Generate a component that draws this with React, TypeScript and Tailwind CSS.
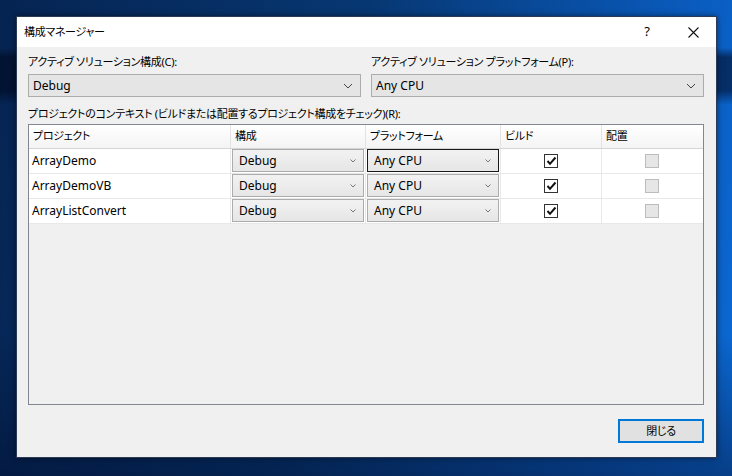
import React from "react";

const font = "font-['Noto_Sans','Noto_Sans_CJK_JP',sans-serif] [font-feature-settings:'palt']";
const jp = "text-[11px] tracking-[-0.3px]";

function Chevron({ big = false }: { big?: boolean }) {
  return big ? (
    <svg width="10" height="6" viewBox="0 0 10 6" className="shrink-0">
      <path d="M1 1 L5 5 L9 1" fill="none" stroke="#444" strokeWidth="1" />
    </svg>
  ) : (
    <svg width="6" height="4" viewBox="0 0 6 4" className="shrink-0">
      <path d="M0.5 0.5 L3 3 L5.5 0.5" fill="none" stroke="#777" strokeWidth="1" />
    </svg>
  );
}

function CellCombo({ value, focused = false }: { value: string; focused?: boolean }) {
  return (
    <div
      className={`h-[23px] flex items-center justify-between pl-[6px] pr-[7px] bg-[linear-gradient(#f2f2f2,#e6e6e6)] border ${
        focused ? "border-[#1a1a1a]" : "border-[#acacac]"
      }`}
    >
      <span className="text-[12px] text-black leading-none">{value}</span>
      <Chevron />
    </div>
  );
}

function Check({ checked }: { checked: boolean }) {
  return checked ? (
    <div className="w-[14px] h-[14px] border border-[#333] bg-white flex items-center justify-center">
      <svg width="11" height="10" viewBox="0 0 11 10">
        <path d="M1.5 5 L4 7.8 L9.5 1.5" fill="none" stroke="#111" strokeWidth="2" />
      </svg>
    </div>
  ) : (
    <div className="w-[14px] h-[14px] border border-[#bcbcbc] bg-[#e6e6e6]" />
  );
}

const rows = ["ArrayDemo", "ArrayDemoVB", "ArrayListConvert"];
const cols = "grid-cols-[202px_135px_135px_101px_100px]";

export default function App() {
  return (
    <div
      className={`${font} w-[732px] h-[476px] overflow-hidden pl-[16px] pt-[16px] bg-[linear-gradient(180deg,rgba(0,0,0,0)_10%,rgba(0,5,25,0.55)_12%,rgba(0,5,25,0.55)_19%,rgba(0,0,0,0)_22%,rgba(0,0,0,0)_70%,rgba(0,10,40,0.45)_100%),linear-gradient(100deg,#062452_0%,#073772_45%,#0a5bbd_85%,#0c6ad6_100%)]`}
    >
      <div className="w-[701px] h-[442px] flex flex-col bg-[#f0f0f0] border border-[#2b3a55] shadow-[0_0_6px_rgba(0,0,0,0.5)]">
        {/* title bar */}
        <div className="h-[30px] bg-white flex items-center pl-[7px] shrink-0">
          <span className={`${jp} text-black flex-1`}>構成マネージャー</span>
          <span className="text-[13px] text-black w-[46px] text-center">?</span>
          <div className="w-[46px] flex items-center justify-center mr-[0px]">
            <svg width="11" height="11" viewBox="0 0 11 11">
              <path d="M0.5 0.5 L10.5 10.5 M10.5 0.5 L0.5 10.5" stroke="#111" strokeWidth="1.1" />
            </svg>
          </div>
        </div>

        {/* body */}
        <div className="flex-1 flex flex-col pl-[11px] pr-[12px] pt-[7px]">
          <div className="flex gap-[10px]">
            <div className="w-[333px] flex flex-col">
              <span className={`${jp} text-black leading-[16px] mb-[4px]`}>
                アクティブ ソリューション構成(C):
              </span>
              <div className="h-[23px] bg-[#e5e5e5] border border-[#acacac] flex items-center justify-between pl-[4px] pr-[7px]">
                <span className="text-[12px] text-black">Debug</span>
                <Chevron big />
              </div>
            </div>
            <div className="w-[333px] flex flex-col">
              <span className={`${jp} text-black leading-[16px] mb-[4px]`}>
                アクティブ ソリューション プラットフォーム(P):
              </span>
              <div className="h-[23px] bg-[#e5e5e5] border border-[#acacac] flex items-center justify-between pl-[4px] pr-[7px]">
                <span className="text-[12px] text-black">Any CPU</span>
                <Chevron big />
              </div>
            </div>
          </div>

          <span className={`${jp} text-black leading-[16px] mt-[9px] mb-[2px]`}>
            プロジェクトのコンテキスト (ビルドまたは配置するプロジェクト構成をチェック)(R):
          </span>

          {/* grid */}
          <div className="h-[281px] border border-[#828790] bg-[#f0f0f0] flex flex-col">
            <div className={`grid ${cols} h-[24px] bg-[linear-gradient(#ffffff,#f4f4f4)] border-b border-[#d5d5d5]`}>
              {["プロジェクト", "構成", "プラットフォーム", "ビルド", "配置"].map((h, i) => (
                <div
                  key={h}
                  className={`flex items-center pl-[4px] ${jp} text-black ${i < 4 ? "border-r border-[#e3e3e3]" : ""}`}
                >
                  {h}
                </div>
              ))}
            </div>
            {rows.map((r, ri) => (
              <div key={r} className={`grid ${cols} h-[25px] bg-white border-b border-[#e8e8e8]`}>
                <div className="flex items-center pl-[3px] text-[12px] text-black border-r border-[#e8e8e8]">{r}</div>
                <div className="px-[1px] pt-[0px] border-r border-[#e8e8e8]">
                  <CellCombo value="Debug" />
                </div>
                <div className="px-[1px] border-r border-[#e8e8e8]">
                  <CellCombo value="Any CPU" focused={ri === 0} />
                </div>
                <div className="flex items-center justify-center border-r border-[#e8e8e8]">
                  <Check checked />
                </div>
                <div className="flex items-center justify-center">
                  <Check checked={false} />
                </div>
              </div>
            ))}
          </div>

          <div className="flex justify-end mt-[14px]">
            <button className={`w-[86px] h-[24px] bg-[#e1e1e1] border-2 border-[#0078d7] ${jp} text-black flex items-center justify-center`}>
              閉じる
            </button>
          </div>
        </div>
      </div>
    </div>
  );
}
